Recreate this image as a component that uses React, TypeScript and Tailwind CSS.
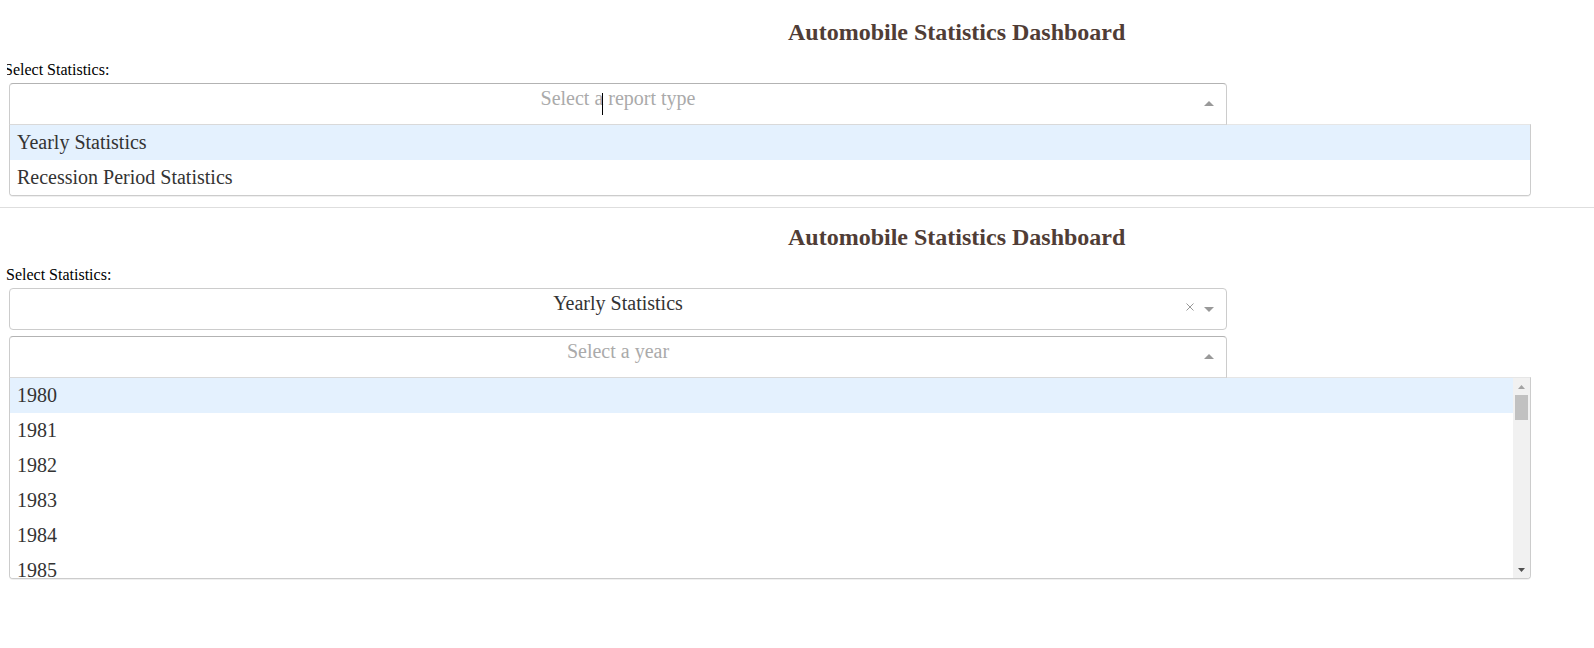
import React from "react";

function UpArrow() {
  return (
    <svg width="10" height="5" viewBox="0 0 10 5" className="block">
      <polygon points="0,5 5,0 10,5" fill="#999" />
    </svg>
  );
}

function DownArrow() {
  return (
    <svg width="10" height="5" viewBox="0 0 10 5" className="block">
      <polygon points="0,0 10,0 5,5" fill="#999" />
    </svg>
  );
}

function ClearX() {
  return (
    <svg width="8" height="8" viewBox="0 0 8 8" className="block">
      <path d="M0.5 0.5 L7.5 7.5 M7.5 0.5 L0.5 7.5" stroke="#999" strokeWidth="1" />
    </svg>
  );
}

type ControlProps = {
  text: string;
  placeholder?: boolean;
  open?: boolean;
  clearable?: boolean;
  caret?: boolean;
};

function Control({ text, placeholder, open, clearable, caret }: ControlProps) {
  return (
    <div
      className={`relative ml-[9px] w-[1218px] h-[42px] border bg-white flex ${
        open
          ? "rounded-t-[4px] border-[#ccc] border-t-[#b3b3b3] border-b-[#d9d9d9]"
          : "rounded-[4px] border-[#ccc]"
      }`}
    >
      <div className="w-[44px] shrink-0" />
      <div
        className={`flex-1 pt-[3px] text-center text-[20px] leading-[22px] ${
          placeholder ? "text-[#aaa]" : "text-[#333]"
        }`}
      >
        {text}
      </div>
      <div className="w-[44px] shrink-0 flex justify-end items-start pr-[12px] gap-[10px]">
        {clearable && (
          <div className="mt-[14px]">
            <ClearX />
          </div>
        )}
        <div className={open ? "mt-[17px]" : "mt-[18px]"}>{open ? <UpArrow /> : <DownArrow />}</div>
      </div>
      {caret && <div className="absolute left-[592px] top-[9px] h-[22px] w-px bg-black" />}
    </div>
  );
}

function Scrollbar() {
  return (
    <div className="w-[17px] h-[200px] shrink-0 bg-[#f1f1f1] flex flex-col items-center">
      <div className="h-[17px] w-full flex items-center justify-center">
        <svg width="7" height="4" viewBox="0 0 7 4" className="block">
          <polygon points="0,4 3.5,0 7,4" fill="#a3a3a3" />
        </svg>
      </div>
      <div className="w-[13px] h-[25px] bg-[#c1c1c1]" />
      <div className="flex-1" />
      <div className="h-[17px] w-full flex items-center justify-center">
        <svg width="7" height="4" viewBox="0 0 7 4" className="block">
          <polygon points="0,0 7,0 3.5,4" fill="#505050" />
        </svg>
      </div>
    </div>
  );
}

function Menu({ items, scroll }: { items: string[]; scroll?: boolean }) {
  return (
    <div className="-mt-px ml-[9px] w-[1522px] border border-[#ccc] border-t-[#e6e6e6] rounded-b-[4px] bg-white shadow-[0_1px_0_rgba(0,0,0,0.06)] flex overflow-hidden">
      <div className={`flex-1 overflow-hidden ${scroll ? "h-[200px]" : ""}`}>
        {items.map((it, i) => (
          <div
            key={it}
            className={`h-[35px] shrink-0 pt-[6px] pl-[7px] text-[20px] leading-[22px] text-[#333] ${
              i === 0 ? "bg-[#e4f1fe]" : "bg-white"
            }`}
          >
            {it}
          </div>
        ))}
      </div>
      {scroll && <Scrollbar />}
    </div>
  );
}

function Title({ pt }: { pt: string }) {
  return (
    <h1 className={`${pt} pl-[788px] text-[24px] leading-[28px] font-bold text-[#503D36]`}>
      Automobile Statistics Dashboard
    </h1>
  );
}

export default function App() {
  const years = ["1980", "1981", "1982", "1983", "1984", "1985"];
  return (
    <div className="w-[1594px] h-[648px] bg-white overflow-hidden font-['Liberation_Serif','Times_New_Roman',serif] text-black">
      <div className="h-[207px]">
        <Title pt="pt-[18px]" />
        <div className="mt-[15px] ml-[7px] w-[200px] overflow-hidden">
          <div className="-ml-[3px] text-[16px] leading-[18px] whitespace-nowrap">Select Statistics:</div>
        </div>
        <div className="mt-[4px]">
          <Control text="Select a report type" placeholder open caret />
          <Menu items={["Yearly Statistics", "Recession Period Statistics"]} />
        </div>
      </div>
      <div className="h-px bg-[#dedede]" />
      <div>
        <Title pt="pt-[15px]" />
        <div className="mt-[15px] pl-[6px] text-[16px] leading-[18px]">Select Statistics:</div>
        <div className="mt-[4px]">
          <Control text="Yearly Statistics" clearable />
        </div>
        <div className="mt-[6px]">
          <Control text="Select a year" placeholder open />
          <Menu items={years} scroll />
        </div>
      </div>
    </div>
  );
}
